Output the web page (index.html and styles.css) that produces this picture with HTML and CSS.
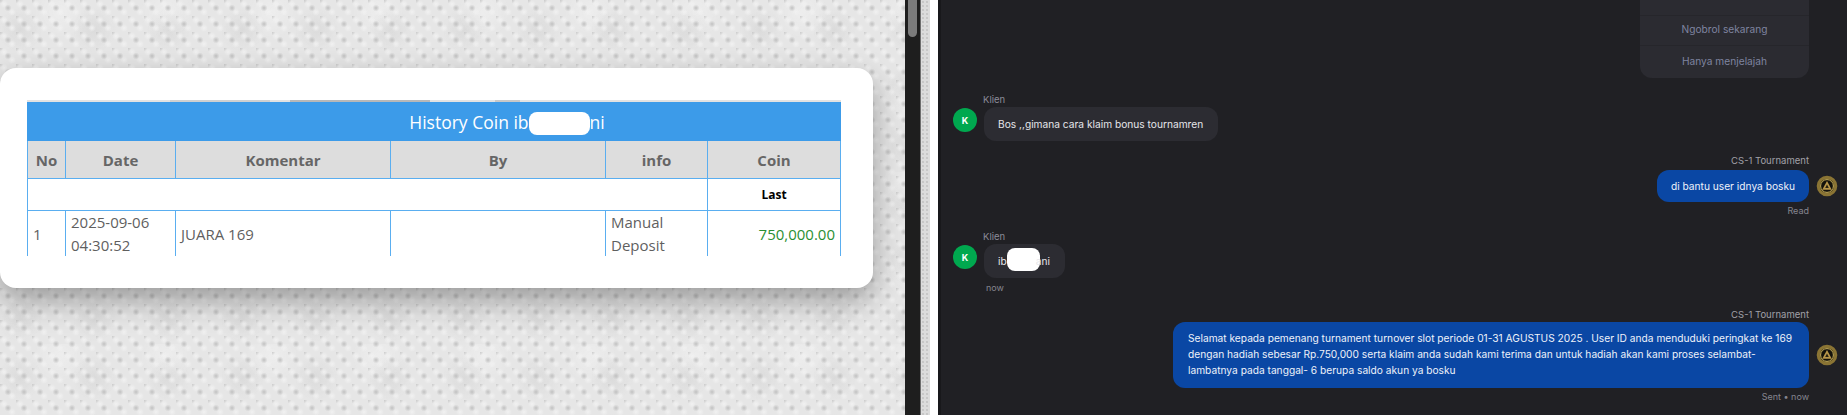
FILE: index.html
```html
<!DOCTYPE html>
<html lang="en">
<head>
    <meta charset="UTF-8">
    <title>History Coin</title>
    <link rel="stylesheet" href="styles.css">
</head>
<body>

<div class="backdrop">
    <div class="coin-card">
        <div class="table-clip">
            <div class="sliver"></div>
            <table class="coin-table">
                <colgroup>
                    <col class="col-no">
                    <col class="col-date">
                    <col class="col-komentar">
                    <col class="col-by">
                    <col class="col-info">
                    <col class="col-coin">
                </colgroup>
                <tr class="title-row">
                    <th colspan="6">History Coin ib<span class="blot-title"></span>ni</th>
                </tr>
                <tr class="head-row">
                    <th>No</th>
                    <th>Date</th>
                    <th>Komentar</th>
                    <th>By</th>
                    <th>info</th>
                    <th>Coin</th>
                </tr>
                <tr class="last-row">
                    <td colspan="5"></td>
                    <td>Last</td>
                </tr>
                <tr class="data-row">
                    <td>1</td>
                    <td>2025-09-06 04:30:52</td>
                    <td>JUARA 169</td>
                    <td></td>
                    <td>Manual Deposit</td>
                    <td class="amount">750,000.00</td>
                </tr>
            </table>
        </div>
    </div>
</div>

<div class="scroll-track"><div class="scroll-thumb"></div></div>
<div class="pattern-strip"></div>
<div class="white-strip"></div>

<div class="chat">
    <div class="quick-replies">
        <div class="quick-item"></div>
        <div class="quick-item">Ngobrol sekarang</div>
        <div class="quick-item">Hanya menjelajah</div>
    </div>

    <div class="sender sender-client first-client">Klien</div>
    <div class="msg-client">
        <div class="avatar-client">K</div>
        <div class="bubble-client">Bos ,,gimana cara klaim bonus tournamren</div>
    </div>

    <div class="sender sender-agent first-agent">CS-1 Tournament</div>
    <div class="msg-agent first-reply">
        <div class="bubble-agent short">di bantu user idnya bosku</div>
        <svg class="avatar-agent" viewBox="0 0 24 24">
            <circle cx="12" cy="12" r="9.5" fill="#14120c" stroke="#8a7434" stroke-width="3.5"/>
            <circle cx="12" cy="12" r="7" fill="none" stroke="#d8bd62" stroke-width="1"/>
            <path d="M12 6.5 L17.2 16 H6.8 Z" fill="#b8964a"/>
            <path d="M12 10.4 L14 14.2 H10 Z" fill="#2a2414"/>
        </svg>
    </div>
    <div class="status read">Read</div>

    <div class="sender sender-client second-client">Klien</div>
    <div class="msg-client">
        <div class="avatar-client">K</div>
        <div class="bubble-client">ib<span class="blot-chat"></span>ani</div>
    </div>
    <div class="status now">now</div>

    <div class="sender sender-agent second-agent">CS-1 Tournament</div>
    <div class="msg-agent second-reply">
        <div class="bubble-agent long">Selamat kepada pemenang turnament turnover slot periode 01-31 AGUSTUS 2025 . User ID anda menduduki peringkat ke 169 dengan hadiah sebesar Rp.750,000 serta klaim anda sudah kami terima dan untuk hadiah akan kami proses selambat-lambatnya pada tanggal- 6 berupa saldo akun ya bosku</div>
        <svg class="avatar-agent" viewBox="0 0 24 24">
            <circle cx="12" cy="12" r="9.5" fill="#14120c" stroke="#8a7434" stroke-width="3.5"/>
            <circle cx="12" cy="12" r="7" fill="none" stroke="#d8bd62" stroke-width="1"/>
            <path d="M12 6.5 L17.2 16 H6.8 Z" fill="#b8964a"/>
            <path d="M12 10.4 L14 14.2 H10 Z" fill="#2a2414"/>
        </svg>
    </div>
    <div class="status sent">Sent • now</div>
</div>

</body>
</html>
```

FILE: styles.css
```css
* {
    box-sizing: border-box;
}

body {
    margin: 0;
    width: 1847px;
    height: 415px;
    display: flex;
    overflow: hidden;
    background-color: #202024;
    font-family: Inter, Arial, sans-serif;
}

/* Left side, textured page behind the modal */
.backdrop {
    width: 905px;
    height: 415px;
    padding-top: 68px;
    flex-shrink: 0;
    background-color: #e6e6e6;
    background-image:
        radial-gradient(circle at 8px 8px, #c0c0c0 0, rgba(190, 190, 190, 0) 3.5px),
        radial-gradient(circle at 0 0, #c9c9c9 0, rgba(190, 190, 190, 0) 3.5px),
        radial-gradient(circle at 4px 4px, #f1f1f1 0, rgba(241, 241, 241, 0) 4px),
        radial-gradient(circle at 12px 12px, #f1f1f1 0, rgba(241, 241, 241, 0) 4px),
        radial-gradient(circle at 20px 30px, rgba(170, 170, 170, 0.18) 0, rgba(170, 170, 170, 0) 22px),
        radial-gradient(circle at 60px 12px, rgba(255, 255, 255, 0.3) 0, rgba(255, 255, 255, 0) 26px);
    background-size: 16px 16px, 16px 16px, 16px 16px, 16px 16px, 74px 58px, 106px 86px;
}

.coin-card {
    width: 873px;
    height: 220px;
    padding: 32px 32px 32px 27px;
    background-color: white;
    border-radius: 16px;
    box-shadow: 0 12px 30px rgba(0, 0, 0, 0.34);
}

.table-clip {
    width: 814px;
    height: 156px;
    overflow: hidden;
    background-color: white;
}

.sliver {
    height: 2px;
    background: linear-gradient(90deg,
        #e2e2e2 143px, #d0d0d0 143px, #d0d0d0 243px, #e2e2e2 243px,
        #e2e2e2 263px, #b8b8b8 263px, #b8b8b8 403px, #e2e2e2 403px,
        #e2e2e2 468px, #c8c8c8 468px, #c8c8c8 493px, #e2e2e2 493px);
}

.coin-table {
    width: 813px;
    table-layout: fixed;
    border-collapse: collapse;
    font-family: "Open Sans", Arial, sans-serif;
    color: #5f5f5f;
}

.col-no { width: 38px; }
.col-date { width: 110px; }
.col-komentar { width: 215px; }
.col-by { width: 215px; }
.col-info { width: 102px; }
.col-coin { width: 133px; }

.coin-table th, .coin-table td {
    border: 1px solid #5aaef0;
    padding: 0 5px;
}

.title-row th {
    height: 38px;
    padding-left: 151px;
    background-color: #3c9be9;
    border-color: #3c9be9;
    color: white;
    font-size: 17.5px;
    font-weight: 400;
}

.blot-title {
    display: inline-block;
    width: 61px;
    height: 23px;
    margin: -4px 0;
    vertical-align: middle;
    background-color: white;
    border-radius: 8px;
}

.head-row th {
    height: 38px;
    background-color: #dddddd;
    font-size: 15px;
    font-weight: 700;
    color: #666666;
}

.last-row td {
    height: 32px;
}

.last-row td:last-child {
    text-align: center;
    font-size: 12px;
    font-weight: 700;
    color: black;
}

.data-row td {
    height: 46px;
    font-size: 15px;
    line-height: 23px;
}

.data-row .amount {
    text-align: right;
    color: #2a8f33;
}

/* Browser scrollbar and the gap between the two windows */
.scroll-track {
    width: 16px;
    height: 415px;
    flex-shrink: 0;
    padding: 0 3px;
    background-color: #1e1e1e;
    border-right: 1px solid #6f6f6f;
}

.scroll-thumb {
    width: 9px;
    height: 37px;
    background-color: #7b7b7b;
    border-radius: 0 0 5px 5px;
}

.pattern-strip {
    width: 9px;
    height: 415px;
    flex-shrink: 0;
    background-color: #dcdcdc;
    background-image: radial-gradient(circle, #b5b5b5 0, rgba(0, 0, 0, 0) 1.5px);
    background-size: 4px 4px;
}

.white-strip {
    width: 8px;
    height: 415px;
    flex-shrink: 0;
    background-color: white;
}

/* Chat panel */
.chat {
    width: 909px;
    height: 415px;
    flex-shrink: 0;
    overflow: hidden;
    padding: 0 38px 0 12px;
    border-left: 3px solid #18181b;
    background-color: #202024;
    display: flex;
    flex-direction: column;
    font-size: 10.2px;
}

.quick-replies {
    align-self: flex-end;
    width: 169px;
    height: 78px;
    background-color: #2b2b31;
    border-radius: 0 0 12px 12px;
    color: #7f84a0;
    flex-shrink: 0;
}

.quick-item {
    height: 30px;
    padding-bottom: 3px;
    display: flex;
    align-items: center;
    justify-content: center;
    border-top: 1px solid #26262b;
}

.quick-item:first-child {
    height: 15px;
    border-top: none;
}

.quick-item:last-child {
    height: 33px;
    padding-bottom: 2px;
}

.sender {
    color: #8b8b98;
    font-size: 9.5px;
    line-height: 12px;
    flex-shrink: 0;
}

.sender-client {
    margin-left: 30px;
}

.sender-agent {
    align-self: flex-end;
    color: #a0a0a8;
}

.first-client { margin-top: 16px; }
.first-agent { margin-top: 14px; }
.second-client { margin-top: 14px; }
.second-agent { margin-top: 15px; }

.msg-client {
    display: flex;
    align-items: flex-start;
    gap: 7px;
    margin-top: 1px;
    flex-shrink: 0;
}

.avatar-client {
    width: 24px;
    height: 24px;
    margin-top: 1px;
    border-radius: 50%;
    background-color: #00a84f;
    color: white;
    font-size: 9px;
    font-weight: 700;
    display: flex;
    align-items: center;
    justify-content: center;
}

.bubble-client {
    height: 34px;
    padding: 0 15px 0 14px;
    display: flex;
    align-items: center;
    border-radius: 12px;
    background-color: #2c2c32;
    color: #e6e6ea;
    line-height: 16px;
}

.blot-chat {
    width: 33px;
    height: 23px;
    margin-bottom: 3px;
    margin-right: -4px;
    flex-shrink: 0;
    background-color: white;
    border-radius: 8px;
}

.msg-agent {
    align-self: flex-end;
    display: flex;
    align-items: center;
    gap: 7px;
    margin-right: -29px;
    flex-shrink: 0;
}

.first-reply { margin-top: 3px; }
.second-reply { margin-top: 1px; }

.bubble-agent {
    background-color: #0a47a4;
    color: #eef2fa;
    border-radius: 12px;
    line-height: 16px;
}

.bubble-agent.short {
    height: 32px;
    padding: 0 14px;
    display: flex;
    align-items: center;
}

.bubble-agent.long {
    width: 636px;
    height: 66px;
    padding: 8px 15px;
}

.avatar-agent {
    width: 22px;
    height: 22px;
    flex-shrink: 0;
    filter: blur(0.6px);
}

.status {
    color: #85858f;
    font-size: 9px;
    line-height: 12px;
    margin-top: 3px;
    flex-shrink: 0;
}

.status.read, .status.sent {
    align-self: flex-end;
}

.status.now {
    margin-left: 33px;
    margin-top: 4px;
}
```
